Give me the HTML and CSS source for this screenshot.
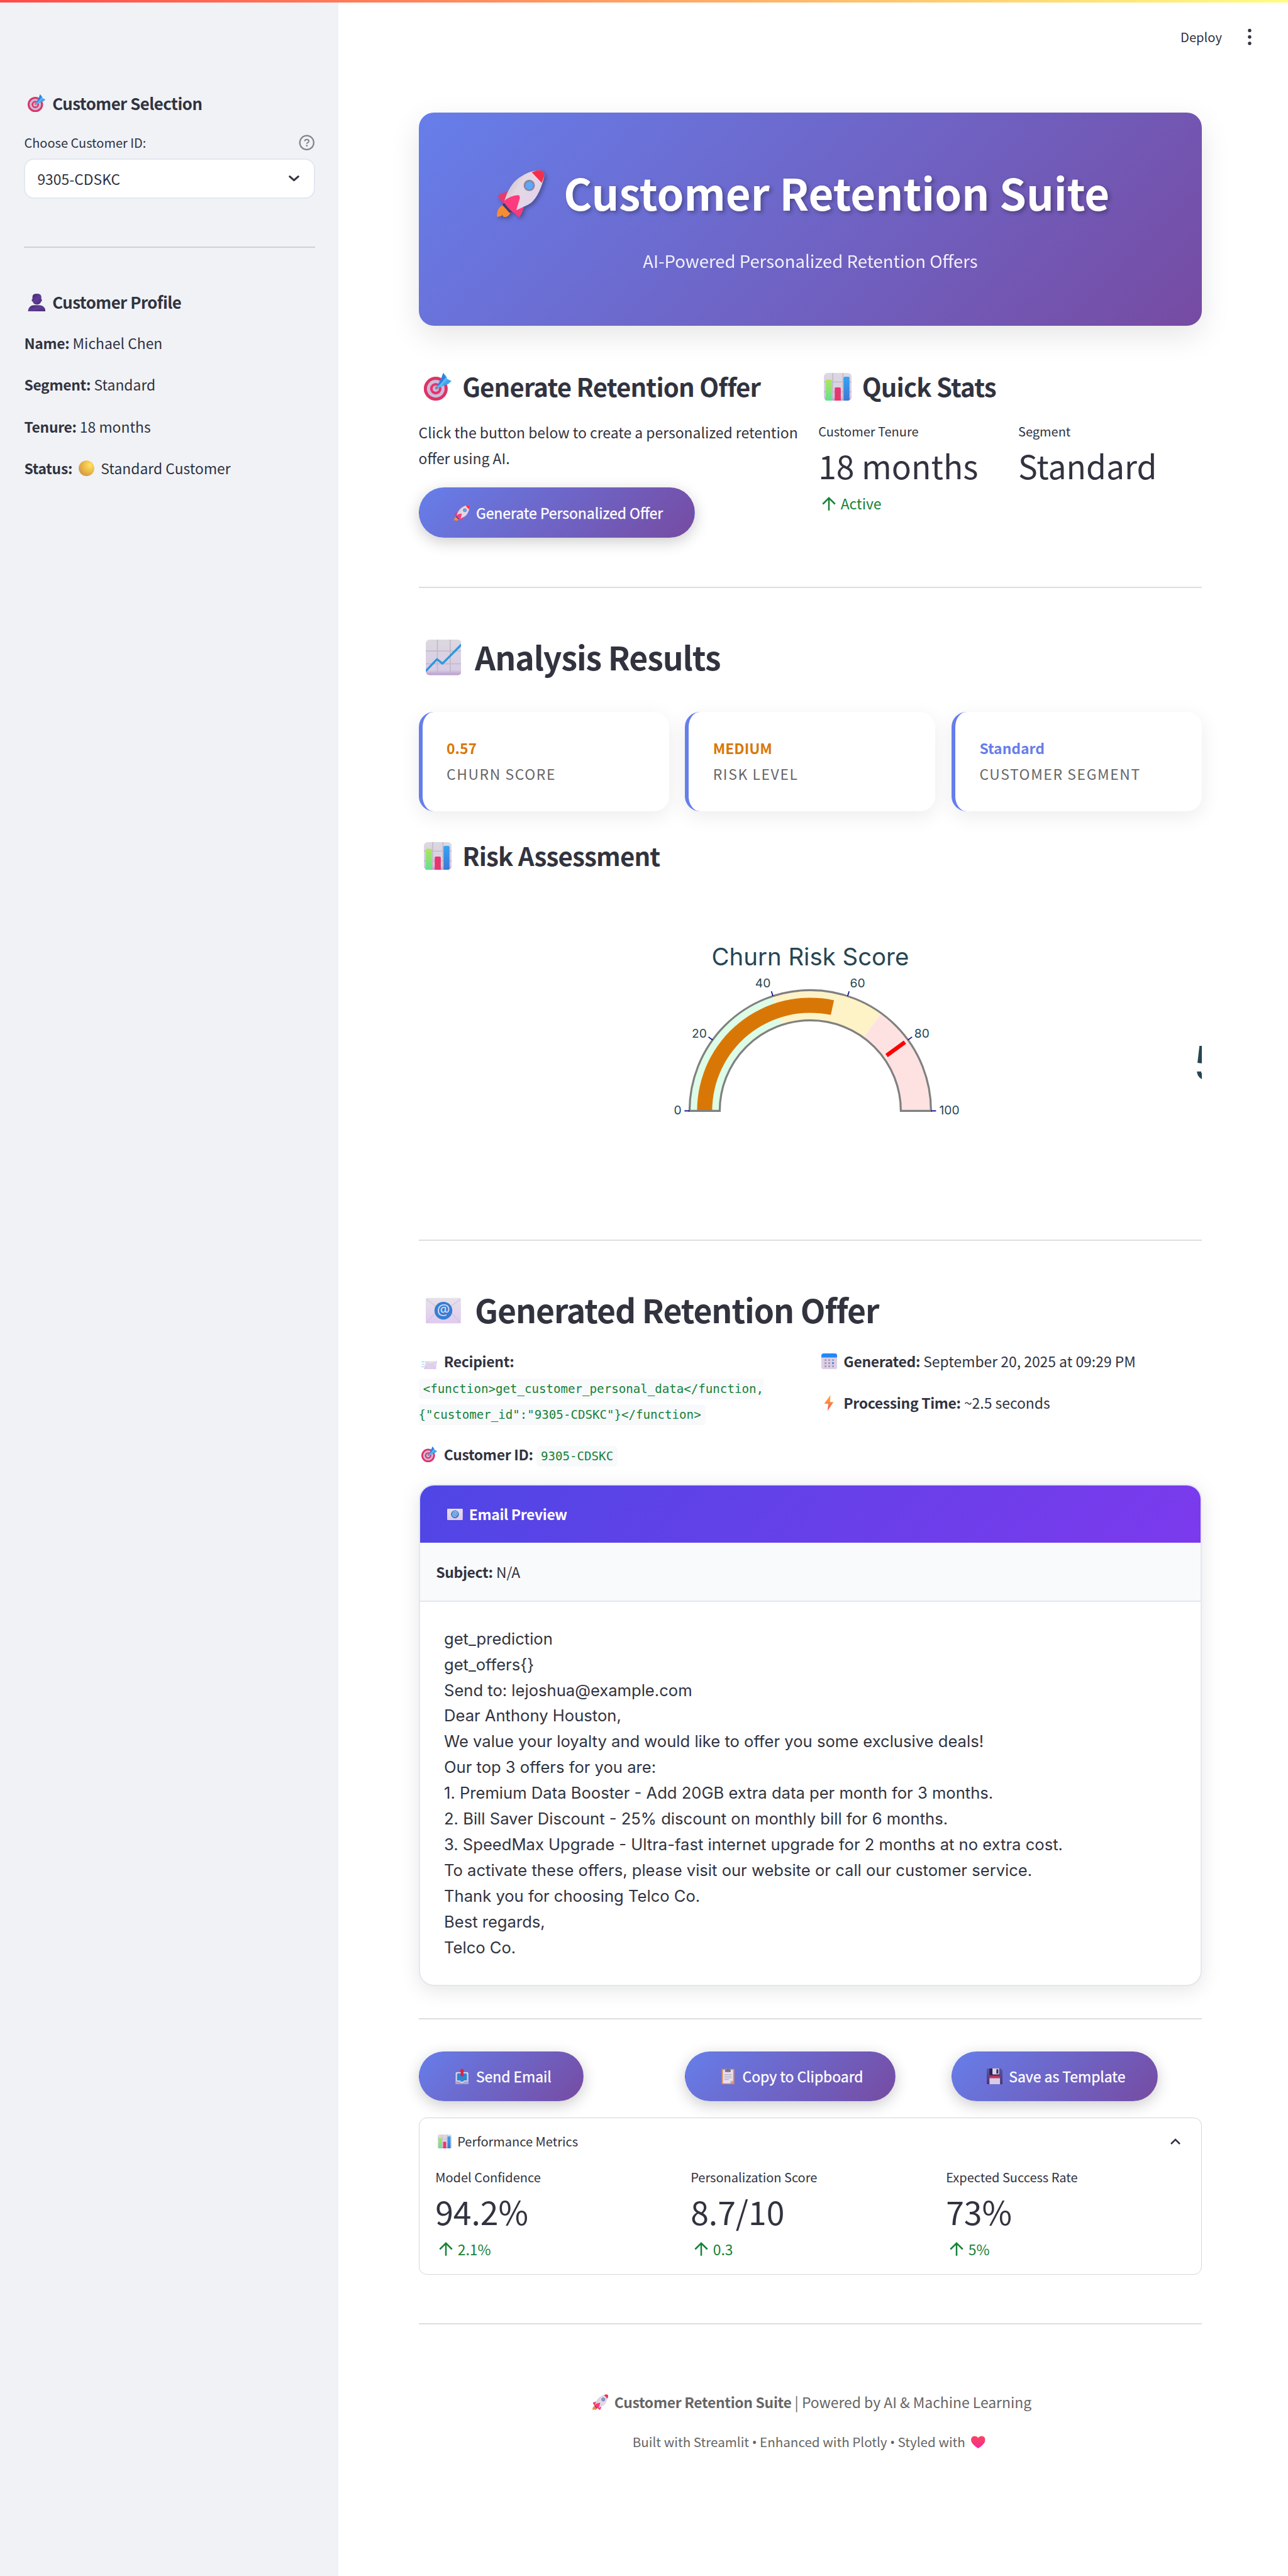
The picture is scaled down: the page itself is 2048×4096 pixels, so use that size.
FILE: index.html
```html
<!DOCTYPE html>
<html lang="en">
<head>
<meta charset="utf-8">
<title>Customer Retention Suite</title>
<link rel="stylesheet" href="styles.css">
</head>
<body>
<svg class="sprite" aria-hidden="true">
  <defs>
    <linearGradient id="gBoard" x1="0" y1="0" x2="0" y2="1"><stop offset="0" stop-color="#dcd8e0"/><stop offset=".85" stop-color="#d8cce6"/><stop offset="1" stop-color="#b79acb"/></linearGradient>
    <linearGradient id="gGreen" x1="0" y1="0" x2="0" y2="1"><stop offset="0" stop-color="#b0e45c"/><stop offset="1" stop-color="#62e094"/></linearGradient>
    <linearGradient id="gBlue" x1="0" y1="0" x2="0" y2="1"><stop offset="0" stop-color="#35a4f6"/><stop offset="1" stop-color="#3f78d2"/></linearGradient>
    <linearGradient id="gPurple" x1="0" y1="0" x2="1" y2="1"><stop offset="0" stop-color="#432766"/><stop offset=".5" stop-color="#5f3c98"/><stop offset="1" stop-color="#472b6e"/></linearGradient>
    <linearGradient id="gBolt" x1="0" y1="0" x2="0" y2="1"><stop offset="0" stop-color="#ffb04a"/><stop offset=".5" stop-color="#fb8a44"/><stop offset="1" stop-color="#f5425a"/></linearGradient>
    <linearGradient id="gHull" x1="0" y1="0" x2="1" y2=".6"><stop offset="0" stop-color="#b9b0b4"/><stop offset=".45" stop-color="#e3d8e2"/><stop offset="1" stop-color="#e4d2ee"/></linearGradient>
    <linearGradient id="gMail" x1="0" y1="0" x2="0" y2="1"><stop offset="0" stop-color="#e6e1e9"/><stop offset="1" stop-color="#e0caef"/></linearGradient>
    <linearGradient id="gHeart" x1="0" y1="0" x2="0" y2="1"><stop offset="0" stop-color="#f9485a"/><stop offset="1" stop-color="#f6289c"/></linearGradient>
    <linearGradient id="gDisk" x1="0" y1="0" x2="0" y2="1"><stop offset="0" stop-color="#5758a6"/><stop offset="1" stop-color="#4e3272"/></linearGradient>
    <radialGradient id="gBall" cx=".72" cy=".3" r=".8"><stop offset="0" stop-color="#ffe261"/><stop offset=".6" stop-color="#e9b544"/><stop offset="1" stop-color="#cf9550"/></radialGradient>
  </defs>
  <symbol id="target" viewBox="0 0 32 32">
    <circle cx="13.7" cy="18.2" r="13.8" fill="#dd3468"/><circle cx="13.7" cy="18.2" r="10.2" fill="#cbbddb"/><circle cx="13.7" cy="18.2" r="6.6" fill="#e8336a"/><circle cx="13.7" cy="18.2" r="3.6" fill="#c9b9da"/><circle cx="14.6" cy="17.2" r="1.8" fill="#8b7f9c"/>
    <path d="M15.3 15 20 6.5 22.3 0 25.6 3.6 27 7 32 9.2 28 12.8 23 14.4 17.5 17Z" fill="#3fa4f2"/>
    <path d="M15.3 15 20 6.5 22.3 0 25 5 19 13Z" fill="#2d82df"/><path d="m16 16.4 9.5-11 1.6 1.8-8 9.2Z" fill="#59bdf4"/>
  </symbol>
  <symbol id="rocket" viewBox="0 0 32 32">
    <path d="M3.8 24C1 25 0 28 0 31.500Q2.200 31.800 3.800 30.500 4.200 31.500 5 32 8.200 31.400 9.300 28.500Z" fill="#f78d33"/>
    <path d="M4.600 21 10.200 28.200 8.500 29 4 23.800Z" fill="#43396b"/>
    <path d="M8.200 14.600Q3 15.600.8 17.400q.8 3 4.200 5.400Z" fill="#e83a6f"/>
    <path d="M12.800 26.900 18.200 24Q17.500 29 15 32l-4.500-4Z" fill="#f53a80"/>
    <path d="M4.800 22Q8 10 15.500 5 22 .5 28.700.2 32 1.200 32 4.200 28 20 21 23.500L12.500 27.500Z" fill="url(#gHull)"/>
    <path d="M23.500 1.700Q26 .3 28.700.2 32 1 32 4L30.200 8.800Z" fill="#f42f4b"/>
    <path d="M4.500 21.200Q9 17.200 14.600 17 16 18 15.200 20L12.600 28.600 11 28.700Q6.500 25 4.500 21.200Z" fill="#fd3a7e"/>
    <circle cx="21.800" cy="10.500" r="3.800" fill="#8b84a3"/><circle cx="21.800" cy="10.600" r="2.600" fill="#5aa9fb"/>
  </symbol>
  <symbol id="person" viewBox="0 0 32 32">
    <path d="M8.500 6Q8.500 0 16.500 0T24.500 6V9.500q1.500.5 1 3-.4 1.800-1.600 1.700-1.300 5.300-7.400 5.300T9 14.200Q7.500 14 7.200 12.200q-.2-2.200 1.300-2.700Z" fill="url(#gPurple)"/>
    <path d="M.5 32Q1.500 20.500 12 20.500h9Q31 20.500 32 32Z" fill="url(#gPurple)"/>
  </symbol>
  <symbol id="ball" viewBox="0 0 32 32"><circle cx="16" cy="16" r="15.800" fill="url(#gBall)"/></symbol>
  <symbol id="bars" viewBox="0 0 32 32">
    <rect width="32" height="32" rx="4.500" fill="url(#gBoard)"/><path d="M10.200 0v32M22 0v32M0 10.400h32M0 21.800h32" stroke="#bdb6c4" stroke-width="1"/>
    <path d="M2 32V9q0-1.400 1.500-1.400h4.300Q9.300 7.600 9.300 9V32Z" fill="url(#gGreen)"/><path d="M12.500 32V18q0-1.300 1.500-1.300h4q1.500 0 1.500 1.300V32Z" fill="#e8366f"/><path d="M22.700 32V5.700q0-1.400 1.500-1.400h4q1.400 0 1.400 1.400V31l-1.600 1Z" fill="url(#gBlue)"/>
  </symbol>
  <symbol id="trend" viewBox="0 0 32 32">
    <rect width="32" height="32" rx="3.500" fill="url(#gBoard)"/><path d="M10.400 0v32M21.900 0v32M0 10.300h32M0 21.700h32" stroke="#bfb9c4" stroke-width=".9"/>
    <path d="M0 28.200 10.100 17.600 15 21.500 32 4.400" fill="none" stroke="#2f97dc" stroke-width="1.900" stroke-linejoin="round"/>
  </symbol>
  <symbol id="email" viewBox="0 0 32 32">
    <rect y="5" width="31.500" height="22.800" rx="1.500" fill="url(#gMail)"/><path d="M.5 6 15.800 17.500 31 6M.5 27.300 12 15M31 27.300 20 15" fill="none" stroke="#d3c3dd" stroke-width=".7"/>
    <circle cx="15.800" cy="16.400" r="8" fill="#347fd4"/><text x="15.800" y="20.400" text-anchor="middle" class="at-sign">@</text>
  </symbol>
  <symbol id="incoming" viewBox="0 0 32 32">
    <path d="M8.500 15.500H32L29.500 31.700H5Z" fill="url(#gMail)"/><path d="m8.500 16 9.500 8 13.500-8M5.500 31.300l9-9M29.300 31.300 21 22.500" fill="none" stroke="#c9b6d8" stroke-width=".8"/>
    <path d="M0 17.200h6.500M1.500 22h4M0 27h5" stroke="#6fd0ee" stroke-width="1.400"/>
  </symbol>
  <symbol id="calendar" viewBox="0 0 32 32">
    <rect width="32" height="32" rx="5" fill="#dccfe6"/><path d="M0 8.300V5Q0 0 5 0h22q5 0 5 5v3.300Z" fill="#2487f8"/>
    <path d="M6.500 11.600h3.800v3.800H6.500Zm7.500 0h3.800v3.800H14Zm7.600 0h3.800v3.800h-3.800ZM6.500 17.800h3.800v3.800H6.500Zm7.500 0h3.800v3.800H14ZM6.500 24h3.800v3.800H6.500Zm7.500 0h3.800v3.800H14Zm7.600 0h3.800v3.800h-3.800Z" fill="#a99cb4"/><rect x="21.600" y="17.800" width="3.800" height="3.800" fill="#2f94f5"/>
  </symbol>
  <symbol id="bolt" viewBox="0 0 32 32"><path d="M18.500 0 6 17.500 14 18 12.500 32 24.500 14.500 17.500 14Z" fill="url(#gBolt)"/></symbol>
  <symbol id="outbox" viewBox="0 0 32 32">
    <rect x="3.200" y="7.200" width="25.600" height="24.800" rx="2.500" fill="#d9d4e2"/><path d="M6 12q0-2 2-2h16q2 0 2 2v12h-6l-1.500 2.500h-5L12 24H6Z" fill="#2d86d6"/><path d="M3.200 26h8l2 3h5.600l2-3h8v4q0 2-2.500 2H5.700q-2.500 0-2.500-2Z" fill="#b3a0ca"/>
    <path d="M16 0l5.500 6H19v10h-5.600V6h-3Z" fill="#d92346"/>
  </symbol>
  <symbol id="clipboard" viewBox="0 0 32 32">
    <rect x="3.200" y="1" width="25.600" height="31" rx="1.500" fill="#de9058"/><path d="M5.800 3H26.200V25l-5.500 5H5.800Z" fill="#e9e1f1"/><path d="M26.200 24.500 20.700 30l-.3-5Z" fill="#c7b5d8"/>
    <rect x="10" y="1.800" width="11.500" height="5.400" rx="1.500" fill="#7b7386"/><circle cx="15.800" cy="2" r="2" fill="#7b7386"/><path d="M8.500 12h15M8.500 15.500h15M8.500 19h15M8.500 22.500h9" stroke="#9b93a8" stroke-width="1"/>
  </symbol>
  <symbol id="floppy" viewBox="0 0 32 32">
    <path d="M0 2Q0 0 2 0h26l4 4v26q0 2-2 2H2q-2 0-2-2Z" fill="url(#gDisk)"/><path d="M5.500 0h21v11.500q0 2-2 2h-17q-2 0-2-2Z" fill="#2e2252"/><path d="M11.500 0h14v10.500q0 1.500-1.500 1.500H13q-1.500 0-1.500-1.500Z" fill="#dcd3e6"/><rect x="19.500" y="1.500" width="4" height="9" fill="#3a2c60"/>
    <path d="M5.500 20V17.200q0-1.500 1.500-1.500h18q1.800 0 1.800 1.500V20Z" fill="#dc2c55"/><path d="M5.500 19.700h21.300V32H5.500Z" fill="#d9cae6"/>
  </symbol>
  <symbol id="heart" viewBox="0 0 32 32"><path d="M16 29.800Q0 19.500 0 10.500 .4 3 8 2.200q5.200 0 8 4.300 2.800-4.300 8-4.300 7.600.8 8 8.300 0 9-16 19.300Z" fill="url(#gHeart)"/></symbol>
  <symbol id="up" viewBox="0 0 22 22"><path d="M11 21.800V2M1.300 11.500 11 1.800l9.700 9.700" fill="none" stroke="#158237" stroke-width="2.500"/></symbol>
</svg>

<div class="app">
  <div class="decoration"></div>
  <aside class="sidebar">
    <h3 class="side-title"><svg class="emoji"><use href="#target"/></svg> Customer Selection</h3>
    <div class="field-label"><span>Choose Customer ID:</span>
      <svg class="help" viewBox="0 0 26 26"><circle cx="13" cy="13" r="11.300" fill="none" stroke="#83848f" stroke-width="2.300"/><path d="M9.600 10.800q.2-3 3.400-3 3.300.1 3.400 2.700 0 1.500-1.800 2.500-1.500.8-1.500 2" fill="none" stroke="#83848f" stroke-width="2"/><circle cx="13.100" cy="18" r="1.400" fill="#83848f"/></svg>
    </div>
    <div class="select"><span>9305-CDSKC</span><svg class="chevron-down" viewBox="0 0 17 10"><path d="m1.700 1.700 6.800 6L15.300 1.700" fill="none" stroke="#31333f" stroke-width="3" stroke-linecap="round" stroke-linejoin="round"/></svg></div>
    <hr class="side-rule">
    <h3 class="side-title profile-title"><svg class="emoji"><use href="#person"/></svg> Customer Profile</h3>
    <p><b>Name:</b> Michael Chen</p>
    <p><b>Segment:</b> Standard</p>
    <p><b>Tenure:</b> 18 months</p>
    <p><b>Status:</b> <svg class="emoji"><use href="#ball"/></svg> Standard Customer</p>
  </aside>

  <main class="main">
    <header class="toolbar"><span>Deploy</span><svg class="dots" viewBox="0 0 6 28"><circle cx="3" cy="3.500" r="2.700"/><circle cx="3" cy="13.800" r="2.700"/><circle cx="3" cy="24" r="2.700"/></svg></header>
    <div class="content">
      <section class="hero">
        <h1><svg class="emoji"><use href="#rocket"/></svg> Customer Retention Suite</h1>
        <p>AI-Powered Personalized Retention Offers</p>
      </section>

      <section class="intro two-col">
        <div>
          <h3 class="h3"><svg class="emoji"><use href="#target"/></svg> Generate Retention Offer</h3>
          <p class="lead">Click the button below to create a personalized retention<br>offer using AI.</p>
          <button class="btn"><svg class="emoji"><use href="#rocket"/></svg> Generate Personalized Offer</button>
        </div>
        <div>
          <h3 class="h3"><svg class="emoji"><use href="#bars"/></svg> Quick Stats</h3>
          <div class="two-col quick">
            <div class="metric"><div class="metric-label">Customer Tenure</div><div class="metric-value">18 months</div><div class="delta"><svg class="arrow"><use href="#up"/></svg>Active</div></div>
            <div class="metric"><div class="metric-label">Segment</div><div class="metric-value">Standard</div></div>
          </div>
        </div>
      </section>
      <hr class="rule rule-intro">

      <h2 class="h2"><svg class="emoji"><use href="#trend"/></svg> Analysis Results</h2>
      <section class="cards">
        <div class="card"><b>0.57</b><span>Churn Score</span></div>
        <div class="card"><b>MEDIUM</b><span>Risk Level</span></div>
        <div class="card"><b class="blue">Standard</b><span>Customer Segment</span></div>
      </section>
      <h3 class="h3 risk-title"><svg class="emoji"><use href="#bars"/></svg> Risk Assessment</h3>
      <svg class="gauge" viewBox="0 0 1245.600 560">
        <path d="M430.400 379.400A192 192 0 0 1 563.070 196.800L577.900 242.440A144 144 0 0 0 478.400 379.400Z" fill="#dcfce7"/>
        <path d="M563.070 196.800A192 192 0 0 1 735.260 224.070L707.040 262.900A144 144 0 0 0 577.900 242.440Z" fill="#fef3c7"/>
        <path d="M735.260 224.070A192 192 0 0 1 814.400 379.400H766.400A144 144 0 0 0 707.040 262.900Z" fill="#fee2e2"/>
        <path d="M442.400 379.400A180 180 0 0 1 660.100 203.400L655.080 226.860A156 156 0 0 0 466.400 379.400Z" fill="#d97706"/>
        <path d="M430.400 379.400A192 192 0 0 1 814.400 379.400H766.400A144 144 0 0 0 478.400 379.400Z" fill="none" stroke="#808080" stroke-width="3.200"/>
        <path d="M743.700 291.300 772.900 270.100" stroke="#f00" stroke-width="6.400"/>
        <path d="M430.400 379.400h-8M814.400 379.400h8M467.070 266.550l-6.500-4.700M563.070 196.800l-2.500-7.600M681.730 196.800l2.500-7.600M777.730 266.550l6.500-4.700" stroke="#00008b" stroke-width="1.600"/>
        <g class="tick-text">
          <text x="411.500" y="385.500" text-anchor="middle">0</text><text x="446" y="262.800" text-anchor="middle">20</text><text x="547" y="183.400" text-anchor="middle">40</text><text x="697.500" y="183.400" text-anchor="middle">60</text><text x="799.800" y="262.800" text-anchor="middle">80</text><text x="843.500" y="385.500" text-anchor="middle">100</text>
        </g>
        <text class="gauge-title" x="622.400" y="148" text-anchor="middle">Churn Risk Score</text>
        <text class="gauge-number" x="1231.500" y="330">56.7%</text>
      </svg>
      <hr class="rule rule-gauge">

      <h2 class="h2"><svg class="emoji"><use href="#email"/></svg> Generated Retention Offer</h2>
      <section class="two-col meta">
        <div>
          <p><svg class="emoji"><use href="#incoming"/></svg> <b>Recipient:</b><br><code>&lt;function&gt;get_customer_personal_data&lt;/function,<br>{"customer_id":"9305-CDSKC"}&lt;/function&gt;</code></p>
          <p><svg class="emoji"><use href="#target"/></svg> <b>Customer ID:</b> <code>9305-CDSKC</code></p>
        </div>
        <div>
          <p><svg class="emoji"><use href="#calendar"/></svg> <b>Generated:</b> September 20, 2025 at 09:29 PM</p>
          <p><svg class="emoji"><use href="#bolt"/></svg> <b>Processing Time:</b> ~2.5 seconds</p>
        </div>
      </section>

      <article class="mail">
        <div class="mail-head"><svg class="emoji"><use href="#email"/></svg> Email Preview</div>
        <div class="mail-subject"><b>Subject:</b> N/A</div>
        <div class="mail-body">get_prediction<br>get_offers{}<br>Send to: lejoshua@example.com<br>Dear Anthony Houston,<br>We value your loyalty and would like to offer you some exclusive deals!<br>Our top 3 offers for you are:<br>1. Premium Data Booster - Add 20GB extra data per month for 3 months.<br>2. Bill Saver Discount - 25% discount on monthly bill for 6 months.<br>3. SpeedMax Upgrade - Ultra-fast internet upgrade for 2 months at no extra cost.<br>To activate these offers, please visit our website or call our customer service.<br>Thank you for choosing Telco Co.<br>Best regards,<br>Telco Co.</div>
      </article>
      <hr class="rule rule-mail">

      <section class="actions">
        <div><button class="btn"><svg class="emoji"><use href="#outbox"/></svg> Send Email</button></div>
        <div><button class="btn"><svg class="emoji"><use href="#clipboard"/></svg> Copy to Clipboard</button></div>
        <div><button class="btn"><svg class="emoji"><use href="#floppy"/></svg> Save as Template</button></div>
      </section>

      <section class="expander">
        <div class="expander-head"><span><svg class="emoji"><use href="#bars"/></svg> Performance Metrics</span><svg class="chevron-up" viewBox="0 0 16 10"><path d="M1 9 8 2l7 7" fill="none" stroke="#31333f" stroke-width="2.600"/></svg></div>
        <div class="three-col">
          <div class="metric"><div class="metric-label">Model Confidence</div><div class="metric-value">94.2%</div><div class="delta"><svg class="arrow"><use href="#up"/></svg>2.1%</div></div>
          <div class="metric"><div class="metric-label">Personalization Score</div><div class="metric-value">8.7/10</div><div class="delta"><svg class="arrow"><use href="#up"/></svg>0.3</div></div>
          <div class="metric"><div class="metric-label">Expected Success Rate</div><div class="metric-value">73%</div><div class="delta"><svg class="arrow"><use href="#up"/></svg>5%</div></div>
        </div>
      </section>
      <hr class="rule rule-end">

      <footer class="footer">
        <p><svg class="emoji"><use href="#rocket"/></svg> <b>Customer Retention Suite</b> | Powered by AI &amp; Machine Learning</p>
        <p class="small">Built with Streamlit <span class="bullet">•</span> Enhanced with Plotly <span class="bullet">•</span> Styled with <svg class="emoji"><use href="#heart"/></svg></p>
      </footer>
    </div>
  </main>
</div>
</body>
</html>
```
FILE: styles.css
```css
* { box-sizing: border-box; }
body {
  margin: 0;
  background: #fff;
  color: #31333f;
  font-family: "Noto Sans CJK SC", "Noto Sans", sans-serif;
  font-size: 22.9px;
  line-height: 41px;
}
h1, h2, h3, p { margin: 0; }
b, h2, h3 { font-weight: 600; letter-spacing: -.02em; }
b { letter-spacing: -.013em; }
hr { border: 0; margin: 0; height: 2px; background: #dedee0; }

.sprite { position: absolute; width: 0; height: 0; }
.at-sign { font: 13px "Noto Sans", sans-serif; letter-spacing: 0; fill: #e8dcf2; }
.emoji { width: 1.1em; height: 1.1em; margin: 0 .214em; vertical-align: -.15em; }

.app { position: relative; display: flex; width: 2048px; height: 4096px; overflow: hidden; }
.decoration { position: absolute; top: 0; left: 0; right: 0; height: 4px; background: linear-gradient(90deg, #ff4b4b, #fffd80); }

/* Sidebar */
.sidebar { width: 537.6px; flex: none; background: #f0f2f6; padding: 145.500px 37px 0 38.400px; }
.side-title { font-size: 25.8px; line-height: 36px; }
.field-label { display: flex; justify-content: space-between; align-items: center; height: 32px; margin-top: 29px; font-size: 20px; }
.help { width: 25.6px; height: 25.6px; }
.select { display: flex; align-items: center; justify-content: space-between; height: 64px; margin-top: 9.500px; padding: 0 23px 0 19px; background: #fff; border: 2px solid #e2e8f0; border-radius: 16px; }
.chevron-down { width: 17px; height: 10px; }
.side-rule { margin-top: 76.400px; background: #cfd1d7; }
.profile-title { margin-top: 68px; margin-bottom: 26.600px; }
.sidebar p { margin-bottom: 25.300px; }

/* Main column */
.main { flex: 1; }
.toolbar { display: flex; justify-content: flex-end; align-items: center; gap: 41px; height: 115px; padding: 2px 58px 0 0; font-size: 20.200px; }
.dots { width: 6px; height: 28px; fill: #31333f; }
.content { width: 1245.600px; margin: 64.200px 0 0 128px; }

.hero { height: 339px; padding-top: 79.800px; border-radius: 24px; text-align: center; color: #fff; background: linear-gradient(135deg, #667eea 0%, #764ba2 100%); box-shadow: 0 16px 48px rgba(0,0,0,.1); }
.hero h1 { padding-right: 37px; font-size: 68.800px; line-height: 92px; font-weight: 700; text-shadow: 3.200px 3.200px 6.400px rgba(0,0,0,.3); }
.hero h1 .emoji { filter: drop-shadow(3px 3px 3px rgba(0,0,0,.3)); }
.hero p { margin-top: 39.200px; font-size: 27.500px; line-height: 49px; opacity: .9; }

.two-col { display: grid; grid-template-columns: 1fr 1fr; gap: 25.600px; }
.three-col, .cards, .actions { display: grid; grid-template-columns: repeat(3, 1fr); gap: 25.600px; }
.intro { margin-top: 68.800px; height: 268px; }
.h3 { font-size: 40.100px; line-height: 54px; }
.h2 { font-size: 51.600px; line-height: 70px; margin-top: 74px; }
.lead { margin: 26.100px 0 26.400px; white-space: nowrap; }
.btn { display: inline-flex; align-items: center; height: 79.500px; padding: 0 50.200px; border: 1px solid transparent; border-radius: 40px; color: #fff; font: 400 22.900px/41px "Noto Sans CJK SC", "Noto Sans", sans-serif; -webkit-text-stroke: .35px #fff; white-space: pre; background: linear-gradient(135deg, #667eea 0%, #764ba2 100%); box-shadow: 0 6.400px 24px rgba(0,0,0,.2); }

.metric-label { font-size: 20px; line-height: 32px; }
.metric-value { margin-top: 2px; font-size: 51.600px; line-height: 72px; }
.delta { display: flex; align-items: center; gap: 7.500px; margin-top: 4px; padding-left: 6px; color: #158237; }
.arrow { width: 22px; height: 22px; }
.quick { margin-top: 29.300px; }

.rule-intro { margin-top: 78px; }
.cards { margin-top: 52.600px; }
.card { display: flex; flex-direction: column; height: 158.700px; padding: 37px 38.400px 0; background: #fff; border-left: 6.400px solid #667eea; border-radius: 24px; box-shadow: 0 8px 32px rgba(0,0,0,.08); }
.card b { color: #d97706; font-weight: 700; letter-spacing: 0; }
.card b.blue { color: #667eea; }
.card span { color: #666; text-transform: uppercase; letter-spacing: 1.600px; }
.risk-title { margin-top: 42.900px; }
.gauge { display: block; width: 1245.600px; height: 560px; overflow: hidden; font-family: Inter, sans-serif; fill: #264653; }
.tick-text { font-size: 19.200px; }
.gauge-title { font-size: 38.400px; }
.gauge-number { font-size: 74px; }
.rule-gauge { margin-top: 23.500px; }

.meta { margin-top: 27.400px; height: 188.200px; }
.meta p { margin-bottom: 25px; white-space: nowrap; }
code { font-family: "DejaVu Sans Mono", "Liberation Mono", monospace; font-size: 19.140px; line-height: 1; color: #158237; background: #f8f9fb; padding: 5px 7.200px; border-radius: 6.400px; }

.mail { margin-top: 27.500px; background: #fff; border: 2px solid #e2e8f0; border-radius: 24px; overflow: hidden; box-shadow: 0 6.400px 32px rgba(0,0,0,.1); }
.mail-head { height: 91.500px; padding: 24.800px 38.400px; color: #fff; font-weight: 600; letter-spacing: -.015em; background: linear-gradient(135deg, #4f46e5, #7c3aed); }
.mail-subject { height: 94px; padding: 25.500px 25.600px; background: #f8fafc; border-bottom: 2px solid #e2e8f0; }
.mail-body { padding: 38.400px; font: 25.600px/40.960px Inter, sans-serif; white-space: nowrap; }
.rule-mail { margin-top: 51px; }
.actions { margin-top: 50.500px; }
.actions > div { height: 79.500px; }

.expander { height: 250.200px; margin-top: 25.800px; padding: 18.800px 25.600px 0; border: 1.600px solid #d6d6d9; border-radius: 12.800px; }
.expander-head { display: flex; justify-content: space-between; align-items: center; margin-bottom: 22.800px; font-size: 20px; line-height: 36px; }
.chevron-up { width: 16px; height: 10px; margin-right: 8px; }
.rule-end { margin-top: 77px; }

.footer { margin-top: 102.200px; text-align: center; color: #666; }
.footer .small { margin-top: 24.700px; font-size: 20.600px; line-height: 37px; }
.bullet { font-family: "Noto Sans", sans-serif; }
```
